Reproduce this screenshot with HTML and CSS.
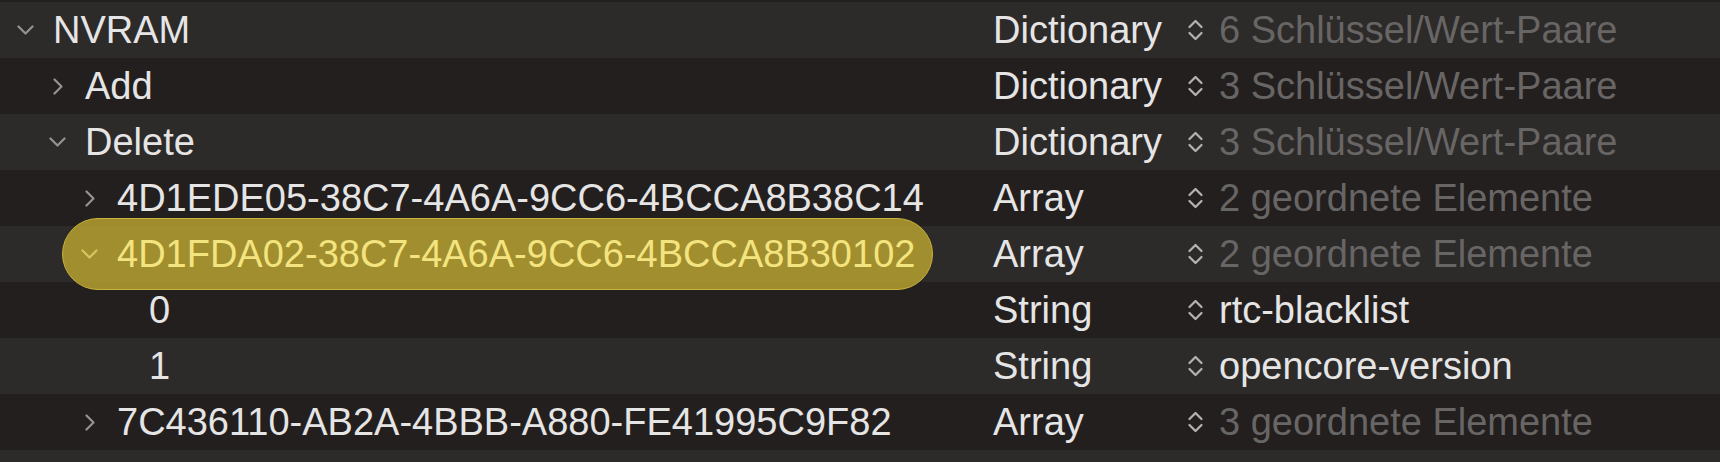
FILE: index.html
```html
<!DOCTYPE html>
<html lang="de">
<head>
<meta charset="utf-8">
<title>NVRAM</title>
<link rel="stylesheet" href="styles.css">
</head>
<body>
<div class="tree">
  <div class="row light">
    <div class="name l0"><span class="chev"><svg width="17" height="10" viewBox="0 0 17 10"><path d="M1.5 1.5L8.5 8.5L15.5 1.5"/></svg></span><span class="key">NVRAM</span></div>
    <div class="type">Dictionary</div>
    <div class="value dim"><svg class="updown" width="15" height="22" viewBox="0 0 15 22"><path d="M1.5 8L7.5 2L13.5 8M1.5 14L7.5 20L13.5 14"/></svg><span>6 Schlüssel/Wert-Paare</span></div>
  </div>
  <div class="row dark">
    <div class="name l1"><span class="chev"><svg width="10" height="17" viewBox="0 0 10 17"><path d="M1.5 1.5L8.5 8.5L1.5 15.5"/></svg></span><span class="key">Add</span></div>
    <div class="type">Dictionary</div>
    <div class="value dim"><svg class="updown" width="15" height="22" viewBox="0 0 15 22"><path d="M1.5 8L7.5 2L13.5 8M1.5 14L7.5 20L13.5 14"/></svg><span>3 Schlüssel/Wert-Paare</span></div>
  </div>
  <div class="row light">
    <div class="name l1"><span class="chev"><svg width="17" height="10" viewBox="0 0 17 10"><path d="M1.5 1.5L8.5 8.5L15.5 1.5"/></svg></span><span class="key">Delete</span></div>
    <div class="type">Dictionary</div>
    <div class="value dim"><svg class="updown" width="15" height="22" viewBox="0 0 15 22"><path d="M1.5 8L7.5 2L13.5 8M1.5 14L7.5 20L13.5 14"/></svg><span>3 Schlüssel/Wert-Paare</span></div>
  </div>
  <div class="row dark">
    <div class="name l2"><span class="chev"><svg width="10" height="17" viewBox="0 0 10 17"><path d="M1.5 1.5L8.5 8.5L1.5 15.5"/></svg></span><span class="key">4D1EDE05-38C7-4A6A-9CC6-4BCCA8B38C14</span></div>
    <div class="type">Array</div>
    <div class="value dim"><svg class="updown" width="15" height="22" viewBox="0 0 15 22"><path d="M1.5 8L7.5 2L13.5 8M1.5 14L7.5 20L13.5 14"/></svg><span>2 geordnete Elemente</span></div>
  </div>
  <div class="row light selected">
    <div class="pill"></div>
    <div class="name l2"><span class="chev"><svg width="17" height="10" viewBox="0 0 17 10"><path d="M1.5 1.5L8.5 8.5L15.5 1.5"/></svg></span><span class="key">4D1FDA02-38C7-4A6A-9CC6-4BCCA8B30102</span></div>
    <div class="type">Array</div>
    <div class="value dim"><svg class="updown" width="15" height="22" viewBox="0 0 15 22"><path d="M1.5 8L7.5 2L13.5 8M1.5 14L7.5 20L13.5 14"/></svg><span>2 geordnete Elemente</span></div>
  </div>
  <div class="row dark">
    <div class="name l3"><span class="chev"></span><span class="key">0</span></div>
    <div class="type">String</div>
    <div class="value"><svg class="updown" width="15" height="22" viewBox="0 0 15 22"><path d="M1.5 8L7.5 2L13.5 8M1.5 14L7.5 20L13.5 14"/></svg><span>rtc-blacklist</span></div>
  </div>
  <div class="row light">
    <div class="name l3"><span class="chev"></span><span class="key">1</span></div>
    <div class="type">String</div>
    <div class="value"><svg class="updown" width="15" height="22" viewBox="0 0 15 22"><path d="M1.5 8L7.5 2L13.5 8M1.5 14L7.5 20L13.5 14"/></svg><span>opencore-version</span></div>
  </div>
  <div class="row dark">
    <div class="name l2"><span class="chev"><svg width="10" height="17" viewBox="0 0 10 17"><path d="M1.5 1.5L8.5 8.5L1.5 15.5"/></svg></span><span class="key">7C436110-AB2A-4BBB-A880-FE41995C9F82</span></div>
    <div class="type">Array</div>
    <div class="value dim"><svg class="updown" width="15" height="22" viewBox="0 0 15 22"><path d="M1.5 8L7.5 2L13.5 8M1.5 14L7.5 20L13.5 14"/></svg><span>3 geordnete Elemente</span></div>
  </div>
  <div class="row light filler"></div>
</div>
</body>
</html>
```

FILE: styles.css
```css
html, body {
  margin: 0;
  padding: 0;
  background: #221f1f;
  overflow: hidden;
}

.tree {
  padding-top: 2px;
  font-family: "Liberation Sans", Arial, Helvetica, sans-serif;
  font-size: 38px;
  color: #e6e5e5;
}

.row {
  position: relative;
  display: grid;
  grid-template-columns: 993px 195px 1fr;
  height: 56px;
  line-height: 56px;
  white-space: nowrap;
}

.row.filler { height: 12px; }

.row.light { background: #2d2a2a; }
.row.dark { background: #231f1f; }

.name {
  display: flex;
  align-items: center;
  position: relative;
  z-index: 2;
}

.name.l0 { padding-left: 17px; }
.name.l1 { padding-left: 49px; }
.name.l2 { padding-left: 81px; }
.name.l3 { padding-left: 113px; }

.chev {
  width: 17px;
  height: 56px;
  margin-right: 19px;
  display: flex;
  align-items: center;
  justify-content: center;
  flex: none;
  color: #959292;
}

.chev svg path,
.updown path {
  fill: none;
  stroke: currentColor;
  stroke-width: 2.2;
  stroke-linecap: round;
  stroke-linejoin: round;
}

.type {
  position: relative;
  z-index: 2;
}

.value {
  display: flex;
  align-items: center;
  gap: 16px;
  color: #e6e5e5;
}

.value.dim { color: #686565; }

.updown {
  flex: none;
  color: #b4b2b2;
}

.pill {
  position: absolute;
  left: 62px;
  top: -8px;
  width: 871px;
  height: 72px;
  box-sizing: border-box;
  border-radius: 36px;
  background: rgba(190, 168, 48, 0.8);
  border: 1.5px solid #c9b43a;
  z-index: 1;
}

.selected .name .key { color: #f3e480; }
.selected .name .chev { color: #d6c660; }
```
